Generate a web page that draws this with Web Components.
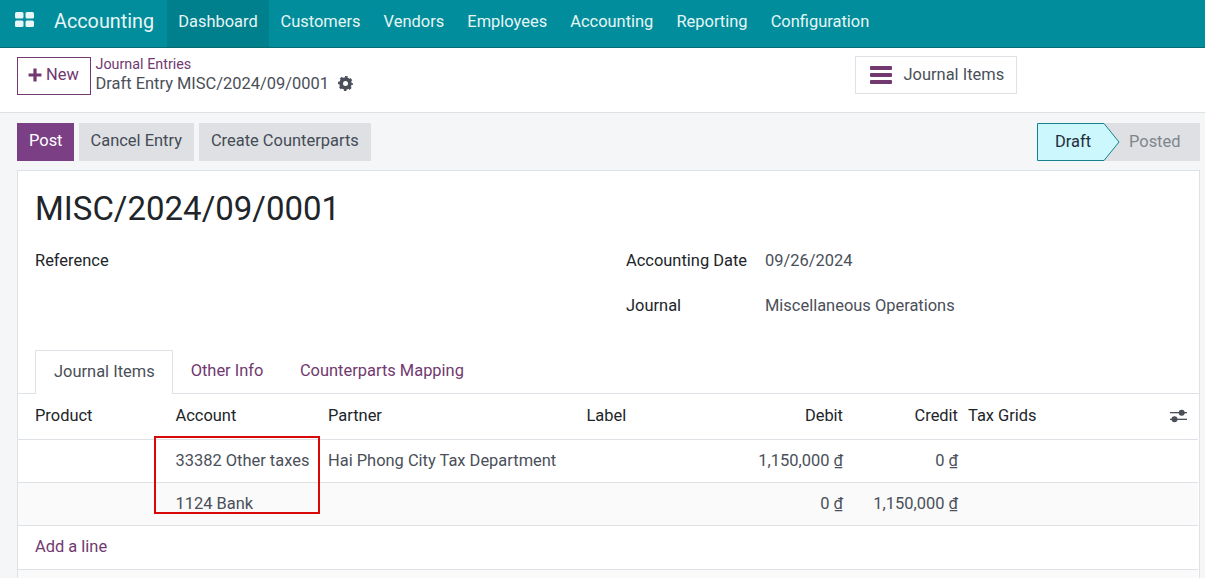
<!DOCTYPE html>
<html>
<head>
<meta charset="utf-8">
<title>Journal entry</title>
<style>
  html, body { margin: 0; height: 578px; overflow: hidden; }
  body { font: 16.45px/24px Roboto, "Noto Sans", sans-serif; color: #4a4f59; background: #f5f6f8; }
</style>
</head>
<body>
<app-navbar></app-navbar>
<control-panel></control-panel>
<form-statusbar></form-statusbar>
<form-sheet></form-sheet>

<script>
const PURPLE = "#71396f";

class AppNavbar extends HTMLElement {
   constructor() {
      super();
      const items = ["Customers", "Vendors", "Employees", "Accounting", "Reporting", "Configuration"];
      this.attachShadow({ mode: "open" }).innerHTML = `
         <style>
            :host { display: flex; align-items: stretch; height: 47px; background: #018d9b; border-bottom: 1px solid #0a6a72; color: #fff; }
            svg { width: 19px; height: 15px; margin: 12px 0 0 15px; }
            .brand { font-size: 19.8px; margin-left: 20px; margin-right: 13px; line-height: 43px; color: #e8f6f7; }
            a { display: block; padding: 0 11.55px; line-height: 43px; color: #e6f5f6; }
            a.active { background: #007f8c; padding: 0 11.2px; }
         </style>
         <svg viewBox="0 0 19 15" fill="#e8f6f7">
            <rect x="0" y="0" width="8.500" height="6.500" rx="1.500"/><rect x="10.500" y="0" width="8.500" height="6.500" rx="1.500"/>
            <rect x="0" y="8.500" width="8.500" height="6.500" rx="1.500"/><rect x="10.500" y="8.500" width="8.500" height="6.500" rx="1.500"/>
         </svg>
         <span class="brand">Accounting</span>
         <a class="active">Dashboard</a>
         ${items.map(i => `<a>${i}</a>`).join("")}
      `;
   }
}

class ControlPanel extends HTMLElement {
   constructor() {
      super();
      this.attachShadow({ mode: "open" }).innerHTML = `
         <style>
            :host { display: flex; height: 65px; box-sizing: border-box; background: #fff; border-bottom: 1px solid #dee2e6; padding: 9px 0 0 17px; }
            .new { box-sizing: border-box; width: 74px; height: 38px; border: 1px solid ${PURPLE}; color: ${PURPLE}; display: flex; align-items: center; justify-content: center; gap: 4px; padding-bottom: 2px; }
            .new svg { width: 14px; height: 14px; margin-left: -1px; }
            .crumbs { margin-left: 4.500px; width: 759px; }
            .parent { color: ${PURPLE}; font-size: 14.350px; line-height: 14px; margin-top: 1px; }
            .title { display: flex; align-items: center; gap: 9px; line-height: 24px; }
            .title svg { width: 15px; height: 15px; margin-top: -2px; }
            .stat { box-sizing: border-box; width: 162px; height: 38px; margin-top: -1px; border: 1px solid #dee2e6; display: flex; align-items: center; padding: 0 0 1px 14px; gap: 12px; }
         </style>
         <div class="new">
            <svg viewBox="0 0 13 13" fill="${PURPLE}"><path d="M5 .5h3V5h4.5v3H8v4.5H5V8H.5V5H5z"/></svg>
            New
         </div>
         <div class="crumbs">
            <div class="parent">Journal Entries</div>
            <div class="title">Draft Entry MISC/2024/09/0001
               <svg viewBox="0 0 24 24" fill="none" stroke="#4a4f59">
                  <circle cx="12" cy="12" r="7" stroke-width="6"/>
                  <circle cx="12" cy="12" r="10.250" stroke-width="3.500" stroke-dasharray="4.100 3.950" stroke-dashoffset="2"/>
               </svg>
            </div>
         </div>
         <div class="stat">
            <svg width="22" height="18" viewBox="0 0 22 18" fill="${PURPLE}"><rect y="0" width="22" height="4" rx="1"/><rect y="7" width="22" height="4" rx="1"/><rect y="14" width="22" height="4" rx="1"/></svg>
            Journal Items
         </div>
      `;
   }
}

class FormStatusbar extends HTMLElement {
   constructor() {
      super();
      this.attachShadow({ mode: "open" }).innerHTML = `
         <style>
            :host { display: flex; gap: 5px; padding: 10px 5px 0 17px; height: 38px; }
            .btn { box-sizing: border-box; height: 38px; padding: 0 12px 3px; display: flex; align-items: center; background: #dee0e4; color: #444b55; }
            .btn.primary { background: #7b3f85; color: #fff; padding-right: 11px; }
            .steps { margin-left: auto; display: flex; }
            .draft { position: relative; z-index: 1; width: 83px; height: 38px; }
            .draft svg { position: absolute; inset: 0; }
            .draft span { position: absolute; left: 18px; top: 7px; color: #1f2d3a; }
            .posted { width: 96px; margin-left: -16px; height: 38px; background: #dee0e4; color: #7f858d; box-sizing: border-box; padding: 7px 0 0 25px; }
         </style>
         <div class="btn primary">Post</div>
         <div class="btn">Cancel Entry</div>
         <div class="btn">Create Counterparts</div>
         <div class="steps">
            <div class="draft">
               <svg width="83" height="38" viewBox="0 0 83 38"><path d="M.5.5H67L82 19 67 37.500H.5z" fill="#ccf8fd" stroke="#14818c"/></svg>
               <span>Draft</span>
            </div>
            <div class="posted">Posted</div>
         </div>
      `;
   }
}

class FormSheet extends HTMLElement {
   constructor() {
      super();
      this.attachShadow({ mode: "open" }).innerHTML = `
         <style>
            :host { display: block; box-sizing: border-box; margin: 9px 5px 0 17px; background: #fff; border: 1px solid #dee2e6; border-bottom: 0; height: 408px; overflow: hidden; }
            h1 { margin: 0; padding: 18px 0 0 17px; font-weight: 400; font-size: 33px; line-height: 40px; color: #212529; }
            .fields { display: grid; grid-template-columns: 591px 139px 1fr; grid-auto-rows: 45px; margin-top: 20px; padding-left: 17px; }
            .lbl { color: #212529; }
            .tabs { display: flex; margin-top: 11px; height: 43px; border-bottom: 1px solid #dee2e6; padding-left: 17px; }
            .tab { padding: 9px 18px 0; color: ${PURPLE}; }
            .tab.on { box-sizing: border-box; height: 44px; background: #fff; border: 1px solid #dee2e6; border-bottom: 0; color: #4a4f59; padding-right: 17px; }
            .tab.last { padding-left: 18.500px; }
         </style>
         <h1>MISC/2024/09/0001</h1>
         <div class="fields">
            <div class="lbl">Reference</div><div class="lbl">Accounting Date</div><div>09/26/2024</div>
            <div></div><div class="lbl">Journal</div><div>Miscellaneous Operations</div>
         </div>
         <div class="tabs">
            <div class="tab on">Journal Items</div>
            <div class="tab">Other Info</div>
            <div class="tab last">Counterparts Mapping</div>
         </div>
         <journal-lines></journal-lines>
      `;
   }
}

class JournalLines extends HTMLElement {
   constructor() {
      super();
      const cur = `<u>₫</u>`;
      this.attachShadow({ mode: "open" }).innerHTML = `
         <style>
            :host { display: block; position: relative; }
            table { width: 1180px; border-collapse: collapse; table-layout: fixed; }
            td, th { padding: 0 0 0 8.500px; font-weight: 400; text-align: left; white-space: nowrap; border-bottom: 1px solid #dee2e6; }
            th { color: #212529; height: 45px; padding-bottom: 1px; box-sizing: border-box; }
            td { height: 42px; }
            td:nth-child(3), th:nth-child(3) { padding-left: 9px; }
            tr.alt td { background: #fafafa; }
            td:first-child, th:first-child { padding-left: 17px; }
            .num { text-align: right; padding: 0 9px 0 0; }
            .credit { padding-right: 5px; }
            .tax { padding-left: 5px; }
            .link { color: ${PURPLE}; }
            tr.add td { height: 44px; padding-bottom: 1px; box-sizing: border-box; }
            tr.end td { height: 8px; border-bottom: 0; }
            .opt { text-align: right; padding-right: 11px; }
            .opt svg { vertical-align: middle; }
            .mark { position: absolute; left: 136px; top: 42px; width: 166px; height: 78px; box-sizing: border-box; border: 2px solid #d80808; }
         </style>
         <table>
            <colgroup>
               <col style="width:149px"><col style="width:152px"><col style="width:259px">
               <col style="width:150px"><col style="width:124px"><col style="width:111px">
               <col><col style="width:40px">
            </colgroup>
            <tr>
               <th>Product</th><th>Account</th><th>Partner</th><th>Label</th>
               <th class="num">Debit</th><th class="num credit">Credit</th><th class="tax">Tax Grids</th>
               <th class="opt"><svg width="17" height="14" viewBox="0 0 17 14" fill="#4a4f59"><rect y="3" width="17" height="1.300"/><rect y="9.700" width="17" height="1.300"/><circle cx="11.700" cy="3.700" r="3"/><circle cx="4.500" cy="10.300" r="3"/></svg></th>
            </tr>
            <tr>
               <td></td><td>33382 Other taxes</td><td>Hai Phong City Tax Department</td><td></td>
               <td class="num">1,150,000 ${cur}</td><td class="num credit">0 ${cur}</td><td></td><td></td>
            </tr>
            <tr class="alt">
               <td></td><td>1124 Bank</td><td></td><td></td>
               <td class="num">0 ${cur}</td><td class="num credit">1,150,000 ${cur}</td><td></td><td></td>
            </tr>
            <tr class="add"><td colspan="8" class="link">Add a line</td></tr>
            <tr class="alt end"><td colspan="8"></td></tr>
         </table>
         <div class="mark"></div>
      `;
   }
}

customElements.define("app-navbar", AppNavbar);
customElements.define("control-panel", ControlPanel);
customElements.define("form-statusbar", FormStatusbar);
customElements.define("journal-lines", JournalLines);
customElements.define("form-sheet", FormSheet);
</script>
</body>
</html>
